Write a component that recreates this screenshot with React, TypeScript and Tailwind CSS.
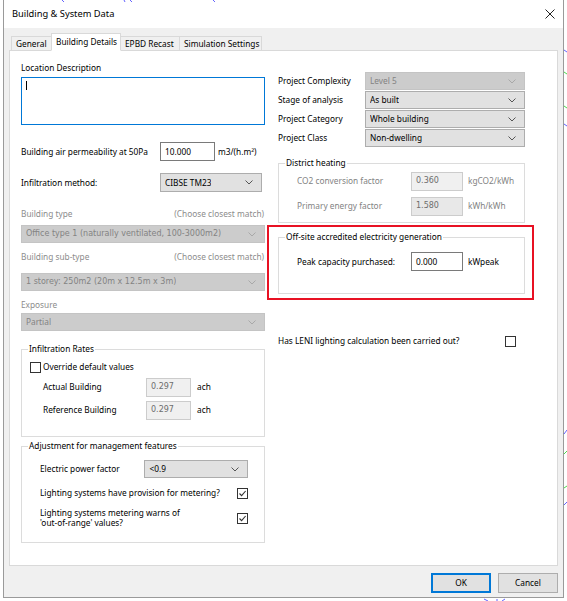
import React from 'react'

const ui = "font-['Noto_Sans',sans-serif]"
const ms = "font-['DejaVu_Sans',sans-serif]"

function Chevron({ disabled }: { disabled?: boolean }) {
  return (
    <svg width="8" height="5" viewBox="0 0 8 5" className="shrink-0">
      <path d="M0.5 0.5 L4 4 L7.5 0.5" fill="none" stroke={disabled ? '#a8a8a8' : '#555'} strokeWidth="1" />
    </svg>
  )
}

function Select({ value, disabled, className = '', mono }: { value: string; disabled?: boolean; className?: string; mono?: boolean }) {
  return (
    <div
      className={`flex items-center justify-between h-[18px] pl-[4px] pr-[8px] border ${
        disabled ? 'bg-[#cccccc] border-[#c4c4c4] text-[#838383]' : 'bg-[#e1e1e1] border-[#adadad] text-black'
      } ${className}`}
    >
      <span className={`truncate ${mono ? `${ms} text-[8px]` : ''}`}>{value}</span>
      <Chevron disabled={disabled} />
    </div>
  )
}

function Input({ value, disabled, className = '' }: { value: string; disabled?: boolean; className?: string }) {
  return (
    <div
      className={`flex items-center h-[19px] px-[4px] border ${
        disabled ? 'bg-[#f0f0f0] border-[#cccccc] text-[#6d6d6d]' : 'bg-white border-[#7a7a7a] text-black'
      } ${className}`}
    >
      <span className={disabled ? `${ms} text-[8px]` : ''}>{value}</span>
    </div>
  )
}

function Check({ checked, className = '' }: { checked?: boolean; className?: string }) {
  return (
    <div className={`w-[11px] h-[11px] border border-[#333] bg-white flex items-center justify-center shrink-0 ${className}`}>
      {checked && (
        <svg width="9" height="9" viewBox="0 0 9 9">
          <path d="M1.5 4.5 L3.6 6.6 L7.6 2" fill="none" stroke="#333" strokeWidth="1.1" />
        </svg>
      )}
    </div>
  )
}

function Group({ title, className = '', children }: { title: string; className?: string; children?: React.ReactNode }) {
  return (
    <div className={`relative border border-[#dcdcdc] ${className}`}>
      <span className="absolute -top-[8px] left-[6px] bg-white px-[1px] leading-[14px] text-black">{title}</span>
      {children}
    </div>
  )
}

export default function App() {
  return (
    <div className={`${ui} text-[8.3px] leading-[14px] w-[567px] h-[601px] bg-white relative overflow-hidden`}>
      <div className="ml-[3px] w-[561px] h-[598px] border-x border-b border-[#9a9a9a] flex flex-col">
        {/* Title bar */}
        <div className="h-[28px] bg-white flex items-center justify-between pl-[8px] pr-[6px] shrink-0">
          <span className="text-[9.3px] text-black">Building &amp; System Data</span>
          <svg width="12" height="12" viewBox="0 0 12 12" className="mr-[1px]">
            <path d="M1.5 1.5 L10.5 10.5 M10.5 1.5 L1.5 10.5" stroke="#222" strokeWidth="1" />
          </svg>
        </div>

        {/* Body */}
        <div className="flex-1 bg-[#f0f0f0] px-[5px] flex flex-col">
          {/* Tabs */}
          <div className="flex items-end h-[22px] pl-[2px] relative z-10 whitespace-nowrap">
            <div className="h-[15px] mb-[-1px] px-[4px] border border-[#d9d9d9] border-r-0 bg-[#f0f0f0] flex items-center w-[40px]">General</div>
            <div className="h-[18px] mb-[-1px] px-[4px] border border-[#d9d9d9] border-b-white bg-white flex items-center w-[70px]">Building Details</div>
            <div className="h-[15px] mb-[-1px] px-[4px] border border-[#d9d9d9] border-l-0 bg-[#f0f0f0] flex items-center w-[59px]">EPBD Recast</div>
            <div className="h-[15px] mb-[-1px] px-[4px] border border-[#d9d9d9] border-l-0 bg-[#f0f0f0] flex items-center w-[82px]">Simulation Settings</div>
          </div>

          {/* Panel */}
          <div className="h-[516px] bg-white border border-[#d9d9d9] pl-[11px] pt-[10px] flex gap-[13px] text-black">
            {/* Left column */}
            <div className="w-[244px] flex flex-col">
              <div className="h-[14px]">Location Description</div>
              <div className="mt-[2px] h-[48px] border border-[#0078d7] bg-white pl-[4px] pt-[3px]">
                <div className="w-px h-[9px] bg-black" />
              </div>

              <div className="mt-[17px] flex items-center h-[19px]">
                <span className="w-[139px]">Building air permeability at 50Pa</span>
                <Input value="10.000" className="w-[55px]" />
                <span className="ml-[3px]">m3/(h.m²)</span>
              </div>

              <div className="mt-[12px] flex items-center h-[19px]">
                <span className="w-[139px]">Infiltration method:</span>
                <Select value="CIBSE TM23" className="w-[102px] h-[19px]" />
              </div>

              <div className="mt-[15px] h-[14px] flex justify-between text-[#8c8c8c]">
                <span>Building type</span>
                <span className="mr-[1px]">(Choose closest match)</span>
              </div>
              <Select value="Office type 1 (naturally ventilated, 100-3000m2)" disabled mono className="mt-[4px]" />

              <div className="mt-[7px] h-[14px] flex justify-between text-[#8c8c8c]">
                <span>Building sub-type</span>
                <span className="mr-[1px]">(Choose closest match)</span>
              </div>
              <Select value="1 storey: 250m2 (20m x 12.5m x 3m)" disabled mono className="mt-[9px]" />

              <div className="mt-[7px] h-[14px] text-[#8c8c8c]">Exposure</div>
              <Select value="Partial" disabled className="mt-[1px]" />

              <Group title="Infiltration Rates" className="mt-[18px] h-[88px]">
                <div className="pl-[8px] pt-[11px] flex flex-col">
                  <div className="flex items-center h-[12px] gap-[2px]">
                    <Check />
                    <span>Override default values</span>
                  </div>
                  <div className="mt-[5px] flex items-center h-[18px] pl-[13px]">
                    <span className="w-[103px]">Actual Building</span>
                    <Input value="0.297" disabled className="w-[45px] h-[18px]" />
                    <span className="ml-[6px]">ach</span>
                  </div>
                  <div className="mt-[5px] flex items-center h-[18px] pl-[13px]">
                    <span className="w-[103px]">Reference Building</span>
                    <Input value="0.297" disabled className="w-[45px] h-[18px]" />
                    <span className="ml-[6px]">ach</span>
                  </div>
                </div>
              </Group>

              <Group title="Adjustment for management features" className="mt-[9px] h-[97px]">
                <div className="pl-[18px] pr-[16px] pt-[13px] flex flex-col">
                  <div className="flex items-center h-[18px]">
                    <span className="w-[105px]">Electric power factor</span>
                    <Select value="<0.9" className="w-[104px]" />
                  </div>
                  <div className="mt-[9px] flex items-center justify-between h-[12px]">
                    <span>Lighting systems have provision for metering?</span>
                    <Check checked />
                  </div>
                  <div className="mt-[9px] flex items-center justify-between">
                    <span className="leading-[10px]">
                      Lighting systems metering warns of
                      <br />
                      'out-of-range' values?
                    </span>
                    <Check checked />
                  </div>
                </div>
              </Group>
            </div>

            {/* Right column */}
            <div className="w-[247px] flex flex-col">
              <div className="mt-[11px] flex flex-col gap-[1px]">
                {[
                  ['Project Complexity', 'Level 5', true],
                  ['Stage of analysis', 'As built', false],
                  ['Project Category', 'Whole building', false],
                  ['Project Class', 'Non-dwelling', false],
                ].map(([label, value, dis]) => (
                  <div key={label as string} className="flex items-center h-[18px]">
                    <span className="w-[87px]">{label as string}</span>
                    <Select value={value as string} disabled={dis as boolean} className="w-[160px]" />
                  </div>
                ))}
              </div>

              <Group title="District heating" className="mt-[16px] h-[60px]">
                <div className="pl-[18px] pt-[8px] flex flex-col text-[#838383]">
                  <div className="flex items-center h-[18px]">
                    <span className="w-[114px]">CO2 conversion factor</span>
                    <Input value="0.360" className="w-[52px] h-[18px] !border-[#cccccc]" disabled />
                    <span className="ml-[5px]">kgCO2/kWh</span>
                  </div>
                  <div className="mt-[7px] flex items-center h-[18px]">
                    <span className="w-[114px]">Primary energy factor</span>
                    <Input value="1.580" disabled className="w-[52px] h-[18px] !bg-[#e8e8e8]" />
                    <span className="ml-[5px]">kWh/kWh</span>
                  </div>
                </div>
              </Group>

              <div className="relative mt-[14px]">
                <div className="absolute -left-[11px] -right-[9px] -top-[12px] -bottom-[6px] border-2 border-[#e81123] pointer-events-none" />
                <Group title="Off-site accredited electricity generation" className="h-[57px]">
                  <div className="pl-[18px] pt-[14px] flex items-center h-[33px]">
                    <span className="w-[114px]">Peak capacity purchased:</span>
                    <Input value="0.000" className="w-[52px]" />
                    <span className="ml-[5px]">kWpeak</span>
                  </div>
                </Group>
              </div>

              <div className="mt-[40px] flex items-center justify-between h-[14px] pr-[9px]">
                <span>Has LENI lighting calculation been carried out?</span>
                <Check />
              </div>
            </div>
          </div>

          {/* Buttons */}
          <div className="flex justify-end gap-[7px] mt-[7px]">
            <button className="w-[60px] h-[20px] bg-[#e1e1e1] border-2 border-[#0078d7] text-black">OK</button>
            <button className="w-[60px] h-[20px] bg-[#e1e1e1] border border-[#adadad] text-black">Cancel</button>
          </div>
        </div>
      </div>

      {/* background plot fragments behind the dialog */}
      <svg className="absolute left-0 top-0 pointer-events-none" width="567" height="601" viewBox="0 0 567 601">
        <path d="M62 0 L64 2 M124 0 L125 2 M130 0 L132 2 M213 0 L215 2" stroke="#3b3bff" strokeWidth="0.8" fill="none" />
        <path d="M564 50 L567 52 M564 124 L567 126 M564 434 L567 430 M564 505 L567 502" stroke="#3b3bff" strokeWidth="0.8" fill="none" />
        <path d="M564 72 L567 74 M564 106 L567 108 M564 454 L567 451 M564 488 L567 486" stroke="#20d020" strokeWidth="0.8" fill="none" />
        <path d="M484 599 L488 601 M497 599 L497 601 M505 599 L502 601" stroke="#3b3bff" strokeWidth="0.8" fill="none" />
      </svg>
    </div>
  )
}
